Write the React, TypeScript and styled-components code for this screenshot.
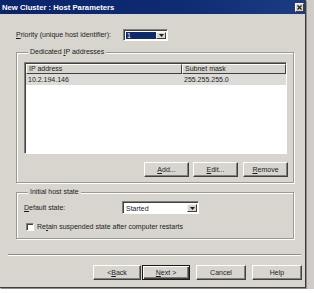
import React from "react";
import styled, { createGlobalStyle } from "styled-components";

const FACE = "#d8d5cf";

const GlobalStyle = createGlobalStyle`
  html, body { margin: 0; padding: 0; background: #ffffff; }
  body {
    font-family: "Liberation Sans", Arial, sans-serif;
    font-size: 7px;
    color: #1c1c1c;
  }
  * { box-sizing: border-box; }
  u { text-decoration: underline; text-underline-offset: 1px; }
`;

const Stage = styled.div`
  display: flex;
  width: 314px;
  height: 289px;
  background: #cfccc7;
`;

const Dialog = styled.div`
  width: 306px;
  height: 288px;
  background: ${FACE};
  border-right: 1px solid #3c3c3c;
  border-bottom: 1px solid #3c3c3c;
  box-shadow: 1px 1px 0 #8c8c8c;
  display: flex;
  flex-direction: column;
`;

const TitleBar = styled.div`
  height: 14px;
  display: flex;
  align-items: center;
  justify-content: space-between;
  padding: 0 1px 0 2px;
  background: linear-gradient(to right, #0a246a 0%, #0e2c72 60%, #1b3c84 100%);
  color: #ffffff;
  font-weight: bold;
  font-size: 7.7px;
`;

const CloseBox = styled.div`
  width: 9px;
  height: 9px;
  background: ${FACE};
  border: 1px solid;
  border-color: #ffffff #404040 #404040 #ffffff;
  display: flex;
  align-items: center;
  justify-content: center;
`;

const Body = styled.div`
  display: flex;
  flex-direction: column;
  padding-top: 15px;
`;

const PriorityRow = styled.div`
  display: flex;
  align-items: center;
  height: 12px;
  padding-left: 16px;
`;

const Label = styled.span<{ $w: number }>`
  width: ${(p) => p.$w}px;
  white-space: nowrap;
  line-height: 8px;
`;

const Combo = styled.div<{ $w: number; $h: number }>`
  width: ${(p) => p.$w}px;
  height: ${(p) => p.$h}px;
  display: flex;
  background: #ffffff;
  border: 1px solid;
  border-color: #808080 #ffffff #ffffff #808080;
  box-shadow: inset 1px 1px 0 #404040;
  padding: 2px 1px 1px 2px;
`;

const ComboValue = styled.div<{ $highlight?: boolean }>`
  flex: 1;
  display: flex;
  align-items: center;
  padding-left: 1px;
  line-height: 7px;
  background: ${(p) => (p.$highlight ? "#0c2a6c" : "transparent")};
  color: ${(p) => (p.$highlight ? "#ffffff" : "#1c1c1c")};
`;

const ArrowBtn = styled.div`
  width: 10px;
  background: ${FACE};
  border: 1px solid;
  border-color: #f4f4f4 #404040 #404040 #f4f4f4;
  display: flex;
  align-items: center;
  justify-content: center;
`;

const Group = styled.fieldset<{ $top: number; $pad: string }>`
  margin: ${(p) => p.$top}px 0 0 16px;
  width: 278px;
  min-width: 0;
  padding: ${(p) => p.$pad};
  border: 1px solid #9a9893;
  box-shadow: inset 1px 1px 0 #ffffff, 1px 1px 0 #ffffff;
  display: flex;
  flex-direction: column;
`;

const Legend = styled.legend`
  margin-left: 4px;
  padding: 0 2px;
  line-height: 8px;
  background: ${FACE};
`;

const ListView = styled.div`
  width: 263px;
  height: 92px;
  background: #ffffff;
  border: 1px solid;
  border-color: #808080 #ffffff #ffffff #808080;
  box-shadow: inset 1px 1px 0 #404040;
  padding: 1px 0 0 1px;
  display: flex;
  flex-direction: column;
`;

const HeaderRow = styled.div`
  display: flex;
  height: 10px;
`;

const HeaderCell = styled.div<{ $w?: number }>`
  ${(p) => (p.$w ? `width: ${p.$w}px;` : "flex: 1;")}
  background: ${FACE};
  border: 1px solid;
  border-color: #ffffff #404040 #404040 #ffffff;
  padding-left: 2px;
  line-height: 8px;
  white-space: nowrap;
`;

const DataRow = styled.div`
  display: flex;
  height: 11px;
  background: #dddbd7;
  align-items: center;
`;

const DataCell = styled.div<{ $w?: number }>`
  ${(p) => (p.$w ? `width: ${p.$w}px;` : "flex: 1;")}
  padding-left: 2px;
  white-space: nowrap;
`;

const ButtonRow = styled.div<{ $top: number; $justify: string; $pad?: number }>`
  display: flex;
  justify-content: ${(p) => p.$justify};
  margin-top: ${(p) => p.$top}px;
  padding-left: ${(p) => p.$pad ?? 0}px;
`;

const Button = styled.div<{ $w: number; $default?: boolean; $gap?: number }>`
  width: ${(p) => p.$w}px;
  height: 15px;
  margin-left: ${(p) => p.$gap ?? 0}px;
  display: flex;
  align-items: center;
  justify-content: center;
  background: ${FACE};
  border: 1px solid;
  border-color: ${(p) =>
    p.$default ? "#1a1a1a" : "#ffffff #404040 #404040 #ffffff"};
  box-shadow: ${(p) =>
    p.$default
      ? "inset 1px 1px 0 #ffffff, inset -1px -1px 0 #404040, inset -2px -2px 0 #808080"
      : "inset -1px -1px 0 #808080"};
  white-space: nowrap;
  line-height: 8px;
`;

const StateRow = styled.div`
  display: flex;
  align-items: center;
  height: 13px;
`;

const CheckRow = styled.div`
  display: flex;
  align-items: center;
  height: 9px;
  margin-top: 8px;
  padding-left: 2px;
  gap: 3px;
`;

const CheckBox = styled.div`
  width: 8px;
  height: 8px;
  background: #ffffff;
  border: 1px solid;
  border-color: #808080 #ffffff #ffffff #808080;
  box-shadow: inset 1px 1px 0 #404040;
`;

const Separator = styled.div`
  margin: 15px 4px 0 8px;
  height: 2px;
  border-top: 1px solid #8e8c88;
  border-bottom: 1px solid #ffffff;
`;

const Arrow = () => (
  <svg width="5" height="3" viewBox="0 0 5 3">
    <path d="M0 0h5L2.5 3z" fill="#1c1c1c" />
  </svg>
);

export default function App() {
  return (
    <>
      <GlobalStyle />
      <Stage>
        <Dialog>
          <TitleBar>
            <span>New Cluster : Host Parameters</span>
            <CloseBox>
              <svg width="5" height="5" viewBox="0 0 5 5">
                <path d="M0.5 0.5L4.5 4.5M4.5 0.5L0.5 4.5" stroke="#1c1c1c" strokeWidth="1.2" />
              </svg>
            </CloseBox>
          </TitleBar>
          <Body>
            <PriorityRow>
              <Label $w={107}>
                <u>P</u>riority (unique host identifier):
              </Label>
              <Combo $w={45} $h={12}>
                <ComboValue $highlight>1</ComboValue>
                <ArrowBtn>
                  <Arrow />
                </ArrowBtn>
              </Combo>
            </PriorityRow>

            <Group $top={7} $pad="6px 5px 5px 7px">
              <Legend>
                Dedicated <u>I</u>P addresses
              </Legend>
              <ListView>
                <HeaderRow>
                  <HeaderCell $w={156}>IP address</HeaderCell>
                  <HeaderCell>Subnet mask</HeaderCell>
                </HeaderRow>
                <DataRow>
                  <DataCell $w={156}>10.2.194.146</DataCell>
                  <DataCell>255.255.255.0</DataCell>
                </DataRow>
              </ListView>
              <ButtonRow $top={8} $justify="flex-end">
                <Button $w={45}>
                  <u>A</u>dd...
                </Button>
                <Button $w={45} $gap={4}>
                  <u>E</u>dit...
                </Button>
                <Button $w={45} $gap={5}>
                  <u>R</u>emove
                </Button>
              </ButtonRow>
            </Group>

            <Group $top={5} $pad="5px 5px 7px 7px">
              <Legend>Initial host state</Legend>
              <StateRow>
                <Label $w={98}>
                  <u>D</u>efault state:
                </Label>
                <Combo $w={77} $h={13}>
                  <ComboValue>Started</ComboValue>
                  <ArrowBtn>
                    <Arrow />
                  </ArrowBtn>
                </Combo>
              </StateRow>
              <CheckRow>
                <CheckBox />
                <span>
                  Re<u>t</u>ain suspended state after computer restarts
                </span>
              </CheckRow>
            </Group>

            <Separator />

            <ButtonRow $top={9} $justify="flex-start" $pad={93}>
              <Button $w={48}>
                &lt; <u>B</u>ack
              </Button>
              <Button $w={48} $gap={1} $default>
                <u>N</u>ext &gt;
              </Button>
              <Button $w={50} $gap={6}>
                Cancel
              </Button>
              <Button $w={50} $gap={6}>
                Help
              </Button>
            </ButtonRow>
          </Body>
        </Dialog>
      </Stage>
    </>
  );
}
